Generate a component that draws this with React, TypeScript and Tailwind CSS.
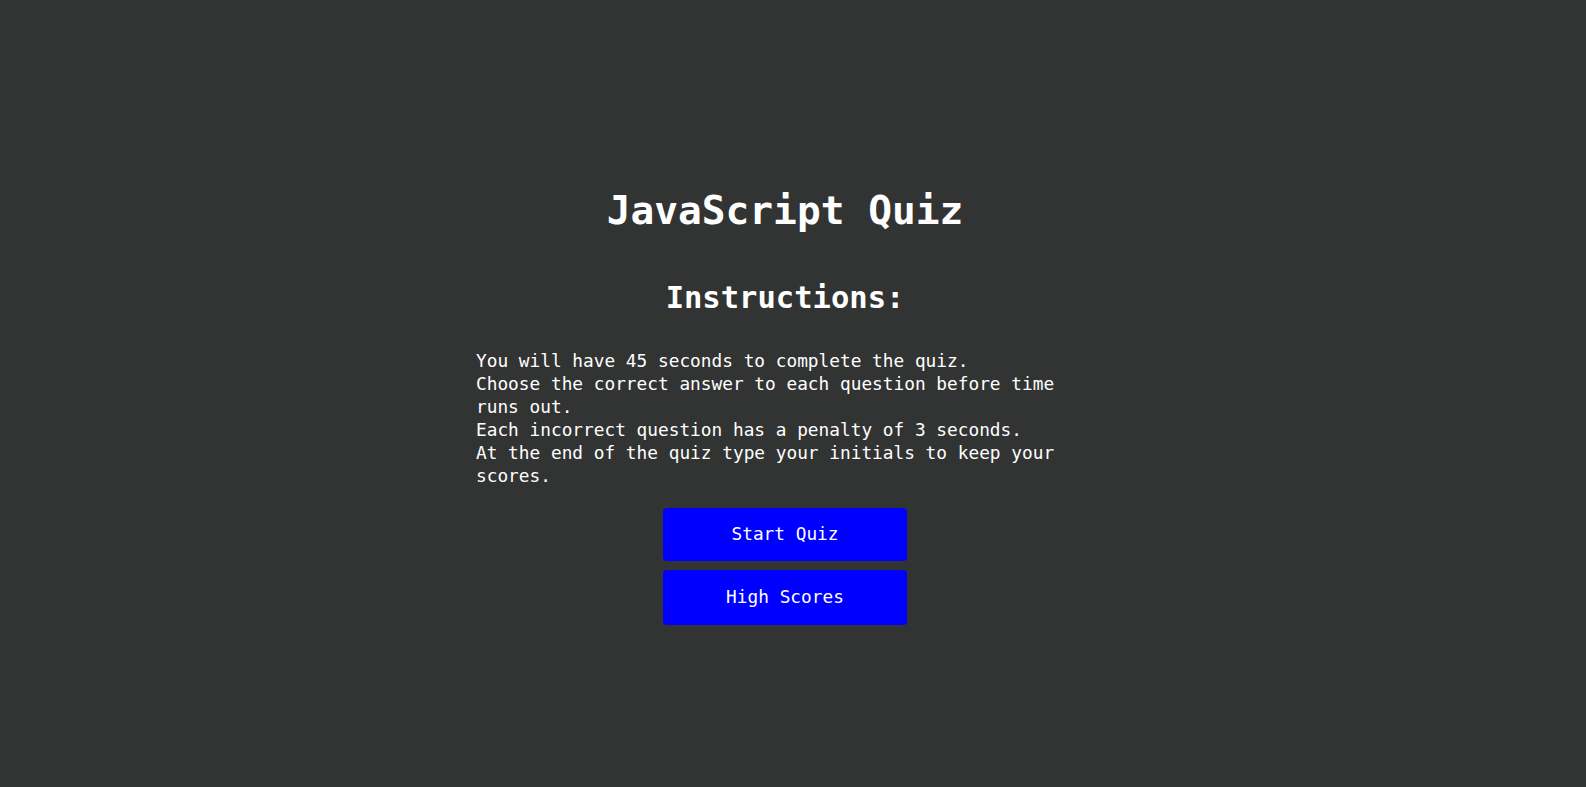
export default function App() {
  const mono = { fontFamily: '"DejaVu Sans Mono", "Liberation Mono", monospace' };

  return (
    <main
      className="min-h-[787px] w-full bg-[#323433] text-white pr-[16px] pt-[186px]"
      style={mono}
    >
      <div className="flex flex-col items-center">
        <h1 className="text-[39.5px] leading-[48px] font-bold">JavaScript Quiz</h1>

        <h2 className="mt-[45px] text-[30.5px] leading-[38px] font-bold">Instructions:</h2>

        <p className="mt-[32px] w-[618px] text-[17.8px] leading-[23px] text-left">
          You will have 45 seconds to complete the quiz.
          <br />
          Choose the correct answer to each question before time runs out.
          <br />
          Each incorrect question has a penalty of 3 seconds.
          <br />
          At the end of the quiz type your initials to keep your scores.
        </p>

        <div className="mt-[21px] flex flex-col gap-[9px]">
          <button className="h-[53px] w-[244px] rounded bg-[#0000ff] text-[17.8px] text-white">
            Start Quiz
          </button>
          <button className="h-[55px] w-[244px] rounded bg-[#0000ff] text-[17.8px] text-white">
            High Scores
          </button>
        </div>
      </div>
    </main>
  );
}
